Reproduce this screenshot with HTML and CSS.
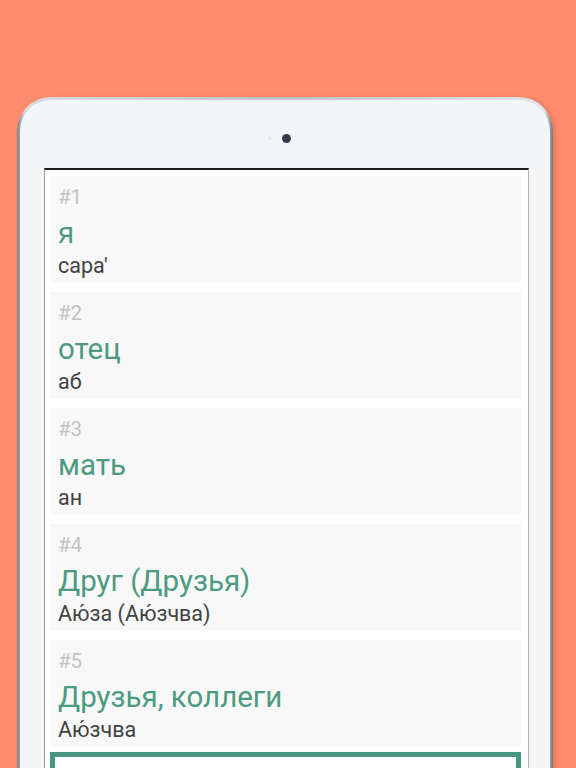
FILE: index.html
```html
<!DOCTYPE html>
<html lang="ru">
<head>
<meta charset="utf-8">
<title>Словарь</title>
<link rel="stylesheet" href="styles.css">
</head>
<body>
<div class="tablet">
  <div class="face">
    <div class="camera-row">
      <span class="sensor"></span>
      <span class="camera"></span>
    </div>
    <div class="screen">
      <div class="card">
        <div class="num">#1</div>
        <div class="word">я</div>
        <div class="trans">сара'</div>
      </div>
      <div class="card">
        <div class="num">#2</div>
        <div class="word">отец</div>
        <div class="trans">аб</div>
      </div>
      <div class="card">
        <div class="num">#3</div>
        <div class="word">мать</div>
        <div class="trans">ан</div>
      </div>
      <div class="card">
        <div class="num">#4</div>
        <div class="word">Друг (Друзья)</div>
        <div class="trans">Аю́за (Аю́зчва)</div>
      </div>
      <div class="card">
        <div class="num">#5</div>
        <div class="word">Друзья, коллеги</div>
        <div class="trans">Аю́зчва</div>
      </div>
      <div class="card card-active"></div>
    </div>
  </div>
</div>
</body>
</html>
```
FILE: styles.css
```css
html, body {
  margin: 0;
  padding: 0;
  height: 768px;
  overflow: hidden;
  background: #fe8b6e;
  font-family: Roboto, "Noto Sans", "Liberation Sans", sans-serif;
}
.tablet {
  margin: 97px 0 0 17px;
  width: 536px;
  height: 671px;
  box-sizing: border-box;
  padding: 3px 3px 0 3px;
  border-radius: 34px 34px 0 0;
  background: linear-gradient(90deg, #7f8286 0%, #d9dbdd 1.5%, #c2c4c7 50%, #e1e3e5 98.5%, #74777b 100%);
  box-shadow: 3px 0 3px rgba(160, 70, 40, 0.2);
}
.face {
  height: 100%;
  border-radius: 31px 31px 0 0;
  background: #f3f5f7;
  box-sizing: border-box;
  padding: 0 21px 0 24px;
}
.camera-row {
  height: 68px;
  display: flex;
  justify-content: center;
  align-items: center;
  gap: 10px;
  padding-right: 15px;
  padding-top: 8px;
  box-sizing: border-box;
}
.sensor {
  width: 4px;
  height: 4px;
  border-radius: 50%;
  background: #e3e6ea;
}
.camera {
  width: 9px;
  height: 9px;
  border-radius: 50%;
  background: #383a4a;
}
.screen {
  background: #ffffff;
  border-top: 2px solid #1d1d1d;
  border-left: 1px solid #9a9a9a;
  border-right: 1px solid #b0b0b0;
  height: 603px;
  overflow: hidden;
  box-sizing: border-box;
  padding: 6px 7px 0 5px;
  display: flex;
  flex-direction: column;
  gap: 9px;
}
.card {
  background: #f8f8f8;
  height: 107px;
  flex: none;
  box-sizing: border-box;
  padding: 9px 0 0 8px;
}
.num {
  color: #c2c2c2;
  font-size: 20.5px;
  line-height: 24px;
}
.word {
  color: #4c9a80;
  font-size: 29.5px;
  line-height: 36px;
  margin-top: 6px;
}
.trans {
  color: #424242;
  font-size: 21.5px;
  line-height: 30px;
}
.card-active {
  background: #ffffff;
  border: 5px solid #4a9580;
  margin-top: -4px;
}
```
